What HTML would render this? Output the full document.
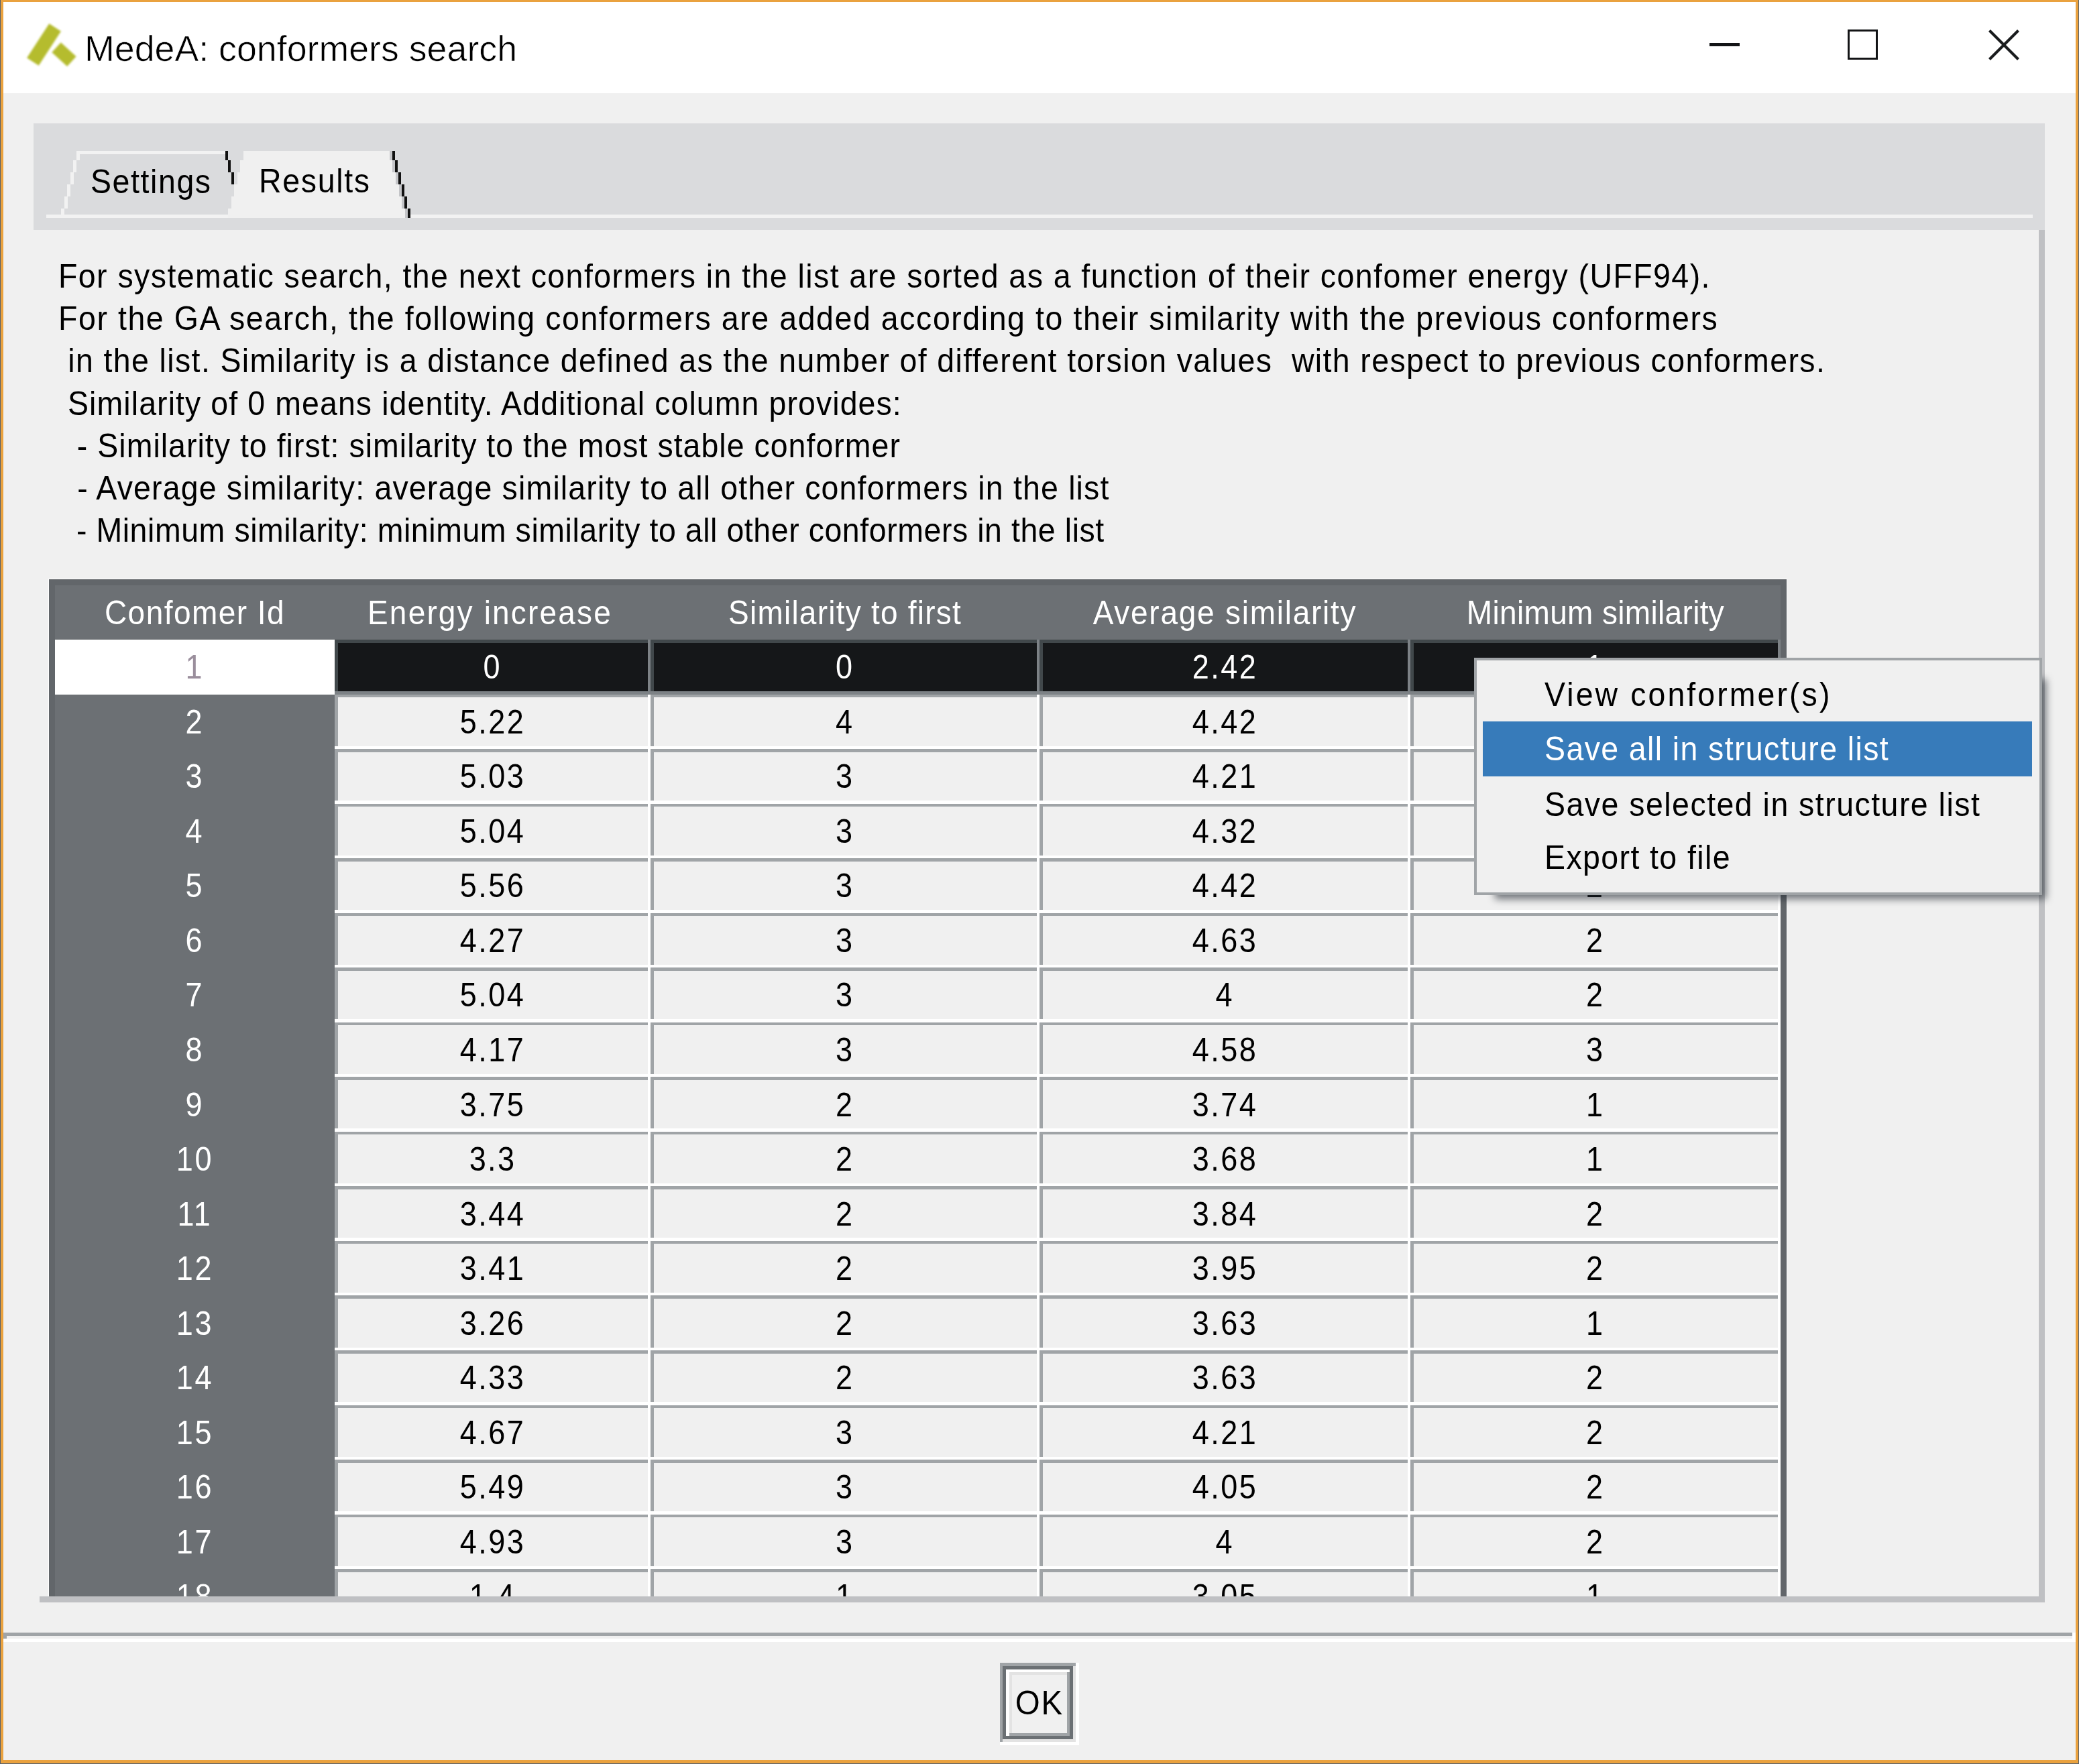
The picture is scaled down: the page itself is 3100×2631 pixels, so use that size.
<!DOCTYPE html>
<html><head><meta charset="utf-8"><style>
html,body{margin:0;padding:0;}
body{width:3100px;height:2631px;position:relative;overflow:hidden;background:#F0F0F0;font-family:"Liberation Sans",sans-serif;}
.r{position:absolute;}
.t{position:absolute;white-space:pre;}
</style></head><body>
<div class="r" style="left:0.00px;top:0.00px;width:3100.00px;height:2631.00px;background:#56606B;"></div>
<div class="r" style="left:1.00px;top:0.00px;width:3098.00px;height:2630.00px;background:#EAA23F;"></div>
<div class="r" style="left:5.00px;top:3.00px;width:3090.00px;height:136.00px;background:#FFFFFF;"></div>
<div class="r" style="left:5.00px;top:139.00px;width:3090.00px;height:2486.00px;background:#F0F0F0;"></div>
<div class="r" style="left:34.5px;top:56.1px;width:61px;height:21px;background:#B5BC2E;transform:rotate(-57deg);filter:blur(1.8px);"></div>
<div class="r" style="left:80.05px;top:71.4px;width:30.5px;height:20px;background:#B5BC2E;transform:rotate(42.5deg);filter:blur(1.8px);"></div>
<div class="t" style="left:126.00px;top:21.59px;font-size:54px;line-height:100px;color:#000;transform:scaleX(0.9950);transform-origin:left center;-webkit-text-stroke:0.7px #FFFFFF;">MedeA: conformers search</div>
<div class="r" style="left:2549.00px;top:64.00px;width:45.00px;height:5.00px;background:#131416;"></div>
<div class="r" style="left:2755px;top:44px;width:45px;height:45px;box-sizing:border-box;border:3.8px solid #131416;"></div>
<svg class="r" style="left:2960px;top:40px" width="56" height="54" viewBox="0 0 56 54"><path d="M6.5 5.5 L49.5 48.5 M49.5 5.5 L6.5 48.5" stroke="#1A1C1E" stroke-width="4.2" fill="none"/></svg>
<div class="r" style="left:50.00px;top:184.00px;width:2999.00px;height:159.00px;background:#DADBDD;"></div>
<div class="r" style="left:69.00px;top:320.00px;width:2962.00px;height:5.00px;background:#F2F2F2;"></div>
<div class="r" style="left:114.00px;top:225.00px;width:222.00px;height:5.00px;background:#F2F2F2;"></div>
<div class="r" style="left:114.00px;top:225.00px;width:5.00px;height:14.00px;background:#F2F2F2;"></div>
<div class="r" style="left:109.00px;top:239.00px;width:5.00px;height:18.00px;background:#F2F2F2;"></div>
<div class="r" style="left:105.00px;top:257.00px;width:5.00px;height:18.00px;background:#F2F2F2;"></div>
<div class="r" style="left:100.00px;top:275.00px;width:5.00px;height:18.00px;background:#F2F2F2;"></div>
<div class="r" style="left:96.00px;top:293.00px;width:5.00px;height:18.00px;background:#F2F2F2;"></div>
<div class="r" style="left:91.00px;top:311.00px;width:5.00px;height:9.00px;background:#F2F2F2;"></div>
<div class="r" style="left:336.00px;top:225.00px;width:4.00px;height:14.00px;background:#111;"></div>
<div class="r" style="left:340.00px;top:239.00px;width:4.00px;height:18.00px;background:#111;"></div>
<div class="r" style="left:345.00px;top:257.00px;width:4.00px;height:18.00px;background:#111;"></div>
<div class="r" style="left:363.00px;top:225.00px;width:222.00px;height:14.00px;background:#F0F0F0;"></div>
<div class="r" style="left:358.00px;top:239.00px;width:231.00px;height:18.00px;background:#F0F0F0;"></div>
<div class="r" style="left:354.00px;top:257.00px;width:240.00px;height:18.00px;background:#F0F0F0;"></div>
<div class="r" style="left:349.00px;top:275.00px;width:249.50px;height:18.00px;background:#F0F0F0;"></div>
<div class="r" style="left:344.50px;top:293.00px;width:258.00px;height:18.00px;background:#F0F0F0;"></div>
<div class="r" style="left:340.00px;top:311.00px;width:267.50px;height:14.00px;background:#F0F0F0;"></div>
<div class="r" style="left:581.00px;top:225.00px;width:4.00px;height:14.00px;background:#C4C5C8;"></div>
<div class="r" style="left:585.00px;top:225.00px;width:4.00px;height:14.00px;background:#111;"></div>
<div class="r" style="left:585.00px;top:239.00px;width:4.00px;height:18.00px;background:#C4C5C8;"></div>
<div class="r" style="left:589.00px;top:239.00px;width:4.00px;height:18.00px;background:#111;"></div>
<div class="r" style="left:590.00px;top:257.00px;width:4.00px;height:18.00px;background:#C4C5C8;"></div>
<div class="r" style="left:594.00px;top:257.00px;width:4.00px;height:18.00px;background:#111;"></div>
<div class="r" style="left:594.50px;top:275.00px;width:4.00px;height:18.00px;background:#C4C5C8;"></div>
<div class="r" style="left:598.50px;top:275.00px;width:4.00px;height:18.00px;background:#111;"></div>
<div class="r" style="left:598.50px;top:293.00px;width:4.00px;height:18.00px;background:#C4C5C8;"></div>
<div class="r" style="left:602.50px;top:293.00px;width:4.00px;height:18.00px;background:#111;"></div>
<div class="r" style="left:603.50px;top:311.00px;width:4.00px;height:14.00px;background:#C4C5C8;"></div>
<div class="r" style="left:607.50px;top:311.00px;width:4.00px;height:14.00px;background:#111;"></div>
<div class="t" style="left:134.50px;top:220.68px;font-size:50px;line-height:100px;color:#000;letter-spacing:1.7px;transform:scaleX(0.9300);transform-origin:left center;">Settings</div>
<div class="t" style="left:386.00px;top:220.28px;font-size:50px;line-height:100px;color:#000;letter-spacing:1.793px;transform:scaleX(0.9300);transform-origin:left center;">Results</div>
<div class="r" style="left:3040.00px;top:343.00px;width:9.00px;height:2047.00px;background:#BFC0C3;"></div>
<div class="r" style="left:59.00px;top:2381.00px;width:2990.00px;height:9.00px;background:#BFC0C3;"></div>
<div class="t" style="left:87.00px;top:361.68px;font-size:50px;line-height:100px;color:#000;letter-spacing:1.534px;transform:scaleX(0.9300);transform-origin:left center;">For systematic search, the next conformers in the list are sorted as a function of their confomer energy (UFF94).</div>
<div class="t" style="left:87.00px;top:424.98px;font-size:50px;line-height:100px;color:#000;letter-spacing:1.681px;transform:scaleX(0.9300);transform-origin:left center;">For the GA search, the following conformers are added according to their similarity with the previous conformers</div>
<div class="t" style="left:87.00px;top:488.28px;font-size:50px;line-height:100px;color:#000;letter-spacing:1.476px;transform:scaleX(0.9300);transform-origin:left center;"> in the list. Similarity is a distance defined as the number of different torsion values  with respect to previous conformers.</div>
<div class="t" style="left:87.00px;top:551.57px;font-size:50px;line-height:100px;color:#000;letter-spacing:1.159px;transform:scaleX(0.9300);transform-origin:left center;"> Similarity of 0 means identity. Additional column provides:</div>
<div class="t" style="left:87.00px;top:614.88px;font-size:50px;line-height:100px;color:#000;letter-spacing:1.087px;transform:scaleX(0.9300);transform-origin:left center;">  - Similarity to first: similarity to the most stable conformer</div>
<div class="t" style="left:87.00px;top:678.17px;font-size:50px;line-height:100px;color:#000;letter-spacing:1.244px;transform:scaleX(0.9300);transform-origin:left center;">  - Average similarity: average similarity to all other conformers in the list</div>
<div class="t" style="left:87.00px;top:741.47px;font-size:50px;line-height:100px;color:#000;letter-spacing:0.594px;transform:scaleX(0.9300);transform-origin:left center;">  - Minimum similarity: minimum similarity to all other conformers in the list</div>
<div class="r" style="left:72.00px;top:863.00px;width:2593.00px;height:1.00px;background:#FFFFFF;"></div>
<div class="r" style="left:72.00px;top:863.00px;width:1.00px;height:1518.00px;background:#FFFFFF;"></div>
<div class="r" style="left:2664.00px;top:863.00px;width:1.00px;height:1518.00px;background:#FFFFFF;"></div>
<div class="r" style="left:73px;top:864px;width:2591px;height:1517px;overflow:hidden;background:#62666A;">
<div class="r" style="left:9.00px;top:9.00px;width:2573.00px;height:81.00px;background:#6C7074;"></div>
<div class="t" style="left:9.00px;top:0.17px;font-size:50px;line-height:100px;color:#FFFFFF;width:417.00px;text-align:center;letter-spacing:1.577px;transform:scaleX(0.9200);transform-origin:center center;">Confomer Id</div>
<div class="t" style="left:422.30px;top:0.17px;font-size:50px;line-height:100px;color:#FFFFFF;width:471.00px;text-align:center;letter-spacing:2.357px;transform:scaleX(0.9200);transform-origin:center center;">Energy increase</div>
<div class="t" style="left:897.00px;top:0.17px;font-size:50px;line-height:100px;color:#FFFFFF;width:580.00px;text-align:center;letter-spacing:1.332px;transform:scaleX(0.9200);transform-origin:center center;">Similarity to first</div>
<div class="t" style="left:1477.00px;top:0.17px;font-size:50px;line-height:100px;color:#FFFFFF;width:553.00px;text-align:center;letter-spacing:1.902px;transform:scaleX(0.9200);transform-origin:center center;">Average similarity</div>
<div class="t" style="left:2030.00px;top:0.17px;font-size:50px;line-height:100px;color:#FFFFFF;width:552.00px;text-align:center;letter-spacing:0.372px;transform:scaleX(0.9200);transform-origin:center center;">Minimum similarity</div>
<div class="r" style="left:9.00px;top:90.00px;width:417.00px;height:81.54px;background:#FFFFFF;"></div>
<div class="t" style="left:9.00px;top:81.17px;font-size:50px;line-height:100px;color:#9A8E9C;width:417.00px;text-align:center;letter-spacing:3.09px;transform:scaleX(0.9000);transform-origin:center center;">1</div>
<div class="r" style="left:426.00px;top:90.00px;width:471.00px;height:81.54px;background:#7D8286;"></div>
<div class="r" style="left:426.00px;top:90.00px;width:466.50px;height:77.04px;background:#41484B;"></div>
<div class="r" style="left:430.50px;top:94.50px;width:462.00px;height:72.54px;background:#151719;"></div>
<div class="t" style="left:426.00px;top:81.17px;font-size:50px;line-height:100px;color:#FFFFFF;width:471.00px;text-align:center;letter-spacing:3.09px;transform:scaleX(0.9000);transform-origin:center center;">0</div>
<div class="r" style="left:897.00px;top:90.00px;width:580.00px;height:81.54px;background:#7D8286;"></div>
<div class="r" style="left:897.00px;top:90.00px;width:575.50px;height:77.04px;background:#41484B;"></div>
<div class="r" style="left:901.50px;top:94.50px;width:571.00px;height:72.54px;background:#151719;"></div>
<div class="t" style="left:897.00px;top:81.17px;font-size:50px;line-height:100px;color:#FFFFFF;width:580.00px;text-align:center;letter-spacing:3.09px;transform:scaleX(0.9000);transform-origin:center center;">0</div>
<div class="r" style="left:1477.00px;top:90.00px;width:553.00px;height:81.54px;background:#7D8286;"></div>
<div class="r" style="left:1477.00px;top:90.00px;width:548.50px;height:77.04px;background:#41484B;"></div>
<div class="r" style="left:1481.50px;top:94.50px;width:544.00px;height:72.54px;background:#151719;"></div>
<div class="t" style="left:1477.00px;top:81.17px;font-size:50px;line-height:100px;color:#FFFFFF;width:553.00px;text-align:center;letter-spacing:2.704px;transform:scaleX(0.9000);transform-origin:center center;">2.42</div>
<div class="r" style="left:2030.00px;top:90.00px;width:552.00px;height:81.54px;background:#7D8286;"></div>
<div class="r" style="left:2030.00px;top:90.00px;width:547.50px;height:77.04px;background:#41484B;"></div>
<div class="r" style="left:2034.50px;top:94.50px;width:543.00px;height:72.54px;background:#151719;"></div>
<div class="t" style="left:2030.00px;top:81.17px;font-size:50px;line-height:100px;color:#FFFFFF;width:552.00px;text-align:center;letter-spacing:3.09px;transform:scaleX(0.9000);transform-origin:center center;">1</div>
<div class="r" style="left:9.00px;top:171.54px;width:417.00px;height:81.54px;background:#6C7074;"></div>
<div class="t" style="left:9.00px;top:162.71px;font-size:50px;line-height:100px;color:#FFFFFF;width:417.00px;text-align:center;letter-spacing:3.09px;transform:scaleX(0.9000);transform-origin:center center;">2</div>
<div class="r" style="left:426.00px;top:171.54px;width:471.00px;height:81.54px;background:#FFFFFF;"></div>
<div class="r" style="left:426.00px;top:171.54px;width:466.50px;height:77.04px;background:#A0A4A7;"></div>
<div class="r" style="left:430.50px;top:176.04px;width:462.00px;height:72.54px;background:#F0F0F0;"></div>
<div class="t" style="left:426.00px;top:162.71px;font-size:50px;line-height:100px;color:#000000;width:471.00px;text-align:center;letter-spacing:2.704px;transform:scaleX(0.9000);transform-origin:center center;">5.22</div>
<div class="r" style="left:897.00px;top:171.54px;width:580.00px;height:81.54px;background:#FFFFFF;"></div>
<div class="r" style="left:897.00px;top:171.54px;width:575.50px;height:77.04px;background:#A0A4A7;"></div>
<div class="r" style="left:901.50px;top:176.04px;width:571.00px;height:72.54px;background:#F0F0F0;"></div>
<div class="t" style="left:897.00px;top:162.71px;font-size:50px;line-height:100px;color:#000000;width:580.00px;text-align:center;letter-spacing:3.09px;transform:scaleX(0.9000);transform-origin:center center;">4</div>
<div class="r" style="left:1477.00px;top:171.54px;width:553.00px;height:81.54px;background:#FFFFFF;"></div>
<div class="r" style="left:1477.00px;top:171.54px;width:548.50px;height:77.04px;background:#A0A4A7;"></div>
<div class="r" style="left:1481.50px;top:176.04px;width:544.00px;height:72.54px;background:#F0F0F0;"></div>
<div class="t" style="left:1477.00px;top:162.71px;font-size:50px;line-height:100px;color:#000000;width:553.00px;text-align:center;letter-spacing:2.704px;transform:scaleX(0.9000);transform-origin:center center;">4.42</div>
<div class="r" style="left:2030.00px;top:171.54px;width:552.00px;height:81.54px;background:#FFFFFF;"></div>
<div class="r" style="left:2030.00px;top:171.54px;width:547.50px;height:77.04px;background:#A0A4A7;"></div>
<div class="r" style="left:2034.50px;top:176.04px;width:543.00px;height:72.54px;background:#F0F0F0;"></div>
<div class="t" style="left:2030.00px;top:162.71px;font-size:50px;line-height:100px;color:#000000;width:552.00px;text-align:center;letter-spacing:3.09px;transform:scaleX(0.9000);transform-origin:center center;">1</div>
<div class="r" style="left:9.00px;top:253.08px;width:417.00px;height:81.54px;background:#6C7074;"></div>
<div class="t" style="left:9.00px;top:244.25px;font-size:50px;line-height:100px;color:#FFFFFF;width:417.00px;text-align:center;letter-spacing:3.09px;transform:scaleX(0.9000);transform-origin:center center;">3</div>
<div class="r" style="left:426.00px;top:253.08px;width:471.00px;height:81.54px;background:#FFFFFF;"></div>
<div class="r" style="left:426.00px;top:253.08px;width:466.50px;height:77.04px;background:#A0A4A7;"></div>
<div class="r" style="left:430.50px;top:257.58px;width:462.00px;height:72.54px;background:#F0F0F0;"></div>
<div class="t" style="left:426.00px;top:244.25px;font-size:50px;line-height:100px;color:#000000;width:471.00px;text-align:center;letter-spacing:2.704px;transform:scaleX(0.9000);transform-origin:center center;">5.03</div>
<div class="r" style="left:897.00px;top:253.08px;width:580.00px;height:81.54px;background:#FFFFFF;"></div>
<div class="r" style="left:897.00px;top:253.08px;width:575.50px;height:77.04px;background:#A0A4A7;"></div>
<div class="r" style="left:901.50px;top:257.58px;width:571.00px;height:72.54px;background:#F0F0F0;"></div>
<div class="t" style="left:897.00px;top:244.25px;font-size:50px;line-height:100px;color:#000000;width:580.00px;text-align:center;letter-spacing:3.09px;transform:scaleX(0.9000);transform-origin:center center;">3</div>
<div class="r" style="left:1477.00px;top:253.08px;width:553.00px;height:81.54px;background:#FFFFFF;"></div>
<div class="r" style="left:1477.00px;top:253.08px;width:548.50px;height:77.04px;background:#A0A4A7;"></div>
<div class="r" style="left:1481.50px;top:257.58px;width:544.00px;height:72.54px;background:#F0F0F0;"></div>
<div class="t" style="left:1477.00px;top:244.25px;font-size:50px;line-height:100px;color:#000000;width:553.00px;text-align:center;letter-spacing:2.704px;transform:scaleX(0.9000);transform-origin:center center;">4.21</div>
<div class="r" style="left:2030.00px;top:253.08px;width:552.00px;height:81.54px;background:#FFFFFF;"></div>
<div class="r" style="left:2030.00px;top:253.08px;width:547.50px;height:77.04px;background:#A0A4A7;"></div>
<div class="r" style="left:2034.50px;top:257.58px;width:543.00px;height:72.54px;background:#F0F0F0;"></div>
<div class="t" style="left:2030.00px;top:244.25px;font-size:50px;line-height:100px;color:#000000;width:552.00px;text-align:center;letter-spacing:3.09px;transform:scaleX(0.9000);transform-origin:center center;">2</div>
<div class="r" style="left:9.00px;top:334.62px;width:417.00px;height:81.54px;background:#6C7074;"></div>
<div class="t" style="left:9.00px;top:325.79px;font-size:50px;line-height:100px;color:#FFFFFF;width:417.00px;text-align:center;letter-spacing:3.09px;transform:scaleX(0.9000);transform-origin:center center;">4</div>
<div class="r" style="left:426.00px;top:334.62px;width:471.00px;height:81.54px;background:#FFFFFF;"></div>
<div class="r" style="left:426.00px;top:334.62px;width:466.50px;height:77.04px;background:#A0A4A7;"></div>
<div class="r" style="left:430.50px;top:339.12px;width:462.00px;height:72.54px;background:#F0F0F0;"></div>
<div class="t" style="left:426.00px;top:325.79px;font-size:50px;line-height:100px;color:#000000;width:471.00px;text-align:center;letter-spacing:2.704px;transform:scaleX(0.9000);transform-origin:center center;">5.04</div>
<div class="r" style="left:897.00px;top:334.62px;width:580.00px;height:81.54px;background:#FFFFFF;"></div>
<div class="r" style="left:897.00px;top:334.62px;width:575.50px;height:77.04px;background:#A0A4A7;"></div>
<div class="r" style="left:901.50px;top:339.12px;width:571.00px;height:72.54px;background:#F0F0F0;"></div>
<div class="t" style="left:897.00px;top:325.79px;font-size:50px;line-height:100px;color:#000000;width:580.00px;text-align:center;letter-spacing:3.09px;transform:scaleX(0.9000);transform-origin:center center;">3</div>
<div class="r" style="left:1477.00px;top:334.62px;width:553.00px;height:81.54px;background:#FFFFFF;"></div>
<div class="r" style="left:1477.00px;top:334.62px;width:548.50px;height:77.04px;background:#A0A4A7;"></div>
<div class="r" style="left:1481.50px;top:339.12px;width:544.00px;height:72.54px;background:#F0F0F0;"></div>
<div class="t" style="left:1477.00px;top:325.79px;font-size:50px;line-height:100px;color:#000000;width:553.00px;text-align:center;letter-spacing:2.704px;transform:scaleX(0.9000);transform-origin:center center;">4.32</div>
<div class="r" style="left:2030.00px;top:334.62px;width:552.00px;height:81.54px;background:#FFFFFF;"></div>
<div class="r" style="left:2030.00px;top:334.62px;width:547.50px;height:77.04px;background:#A0A4A7;"></div>
<div class="r" style="left:2034.50px;top:339.12px;width:543.00px;height:72.54px;background:#F0F0F0;"></div>
<div class="t" style="left:2030.00px;top:325.79px;font-size:50px;line-height:100px;color:#000000;width:552.00px;text-align:center;letter-spacing:3.09px;transform:scaleX(0.9000);transform-origin:center center;">2</div>
<div class="r" style="left:9.00px;top:416.16px;width:417.00px;height:81.54px;background:#6C7074;"></div>
<div class="t" style="left:9.00px;top:407.34px;font-size:50px;line-height:100px;color:#FFFFFF;width:417.00px;text-align:center;letter-spacing:3.09px;transform:scaleX(0.9000);transform-origin:center center;">5</div>
<div class="r" style="left:426.00px;top:416.16px;width:471.00px;height:81.54px;background:#FFFFFF;"></div>
<div class="r" style="left:426.00px;top:416.16px;width:466.50px;height:77.04px;background:#A0A4A7;"></div>
<div class="r" style="left:430.50px;top:420.66px;width:462.00px;height:72.54px;background:#F0F0F0;"></div>
<div class="t" style="left:426.00px;top:407.34px;font-size:50px;line-height:100px;color:#000000;width:471.00px;text-align:center;letter-spacing:2.704px;transform:scaleX(0.9000);transform-origin:center center;">5.56</div>
<div class="r" style="left:897.00px;top:416.16px;width:580.00px;height:81.54px;background:#FFFFFF;"></div>
<div class="r" style="left:897.00px;top:416.16px;width:575.50px;height:77.04px;background:#A0A4A7;"></div>
<div class="r" style="left:901.50px;top:420.66px;width:571.00px;height:72.54px;background:#F0F0F0;"></div>
<div class="t" style="left:897.00px;top:407.34px;font-size:50px;line-height:100px;color:#000000;width:580.00px;text-align:center;letter-spacing:3.09px;transform:scaleX(0.9000);transform-origin:center center;">3</div>
<div class="r" style="left:1477.00px;top:416.16px;width:553.00px;height:81.54px;background:#FFFFFF;"></div>
<div class="r" style="left:1477.00px;top:416.16px;width:548.50px;height:77.04px;background:#A0A4A7;"></div>
<div class="r" style="left:1481.50px;top:420.66px;width:544.00px;height:72.54px;background:#F0F0F0;"></div>
<div class="t" style="left:1477.00px;top:407.34px;font-size:50px;line-height:100px;color:#000000;width:553.00px;text-align:center;letter-spacing:2.704px;transform:scaleX(0.9000);transform-origin:center center;">4.42</div>
<div class="r" style="left:2030.00px;top:416.16px;width:552.00px;height:81.54px;background:#FFFFFF;"></div>
<div class="r" style="left:2030.00px;top:416.16px;width:547.50px;height:77.04px;background:#A0A4A7;"></div>
<div class="r" style="left:2034.50px;top:420.66px;width:543.00px;height:72.54px;background:#F0F0F0;"></div>
<div class="t" style="left:2030.00px;top:407.34px;font-size:50px;line-height:100px;color:#000000;width:552.00px;text-align:center;letter-spacing:3.09px;transform:scaleX(0.9000);transform-origin:center center;">2</div>
<div class="r" style="left:9.00px;top:497.70px;width:417.00px;height:81.54px;background:#6C7074;"></div>
<div class="t" style="left:9.00px;top:488.88px;font-size:50px;line-height:100px;color:#FFFFFF;width:417.00px;text-align:center;letter-spacing:3.09px;transform:scaleX(0.9000);transform-origin:center center;">6</div>
<div class="r" style="left:426.00px;top:497.70px;width:471.00px;height:81.54px;background:#FFFFFF;"></div>
<div class="r" style="left:426.00px;top:497.70px;width:466.50px;height:77.04px;background:#A0A4A7;"></div>
<div class="r" style="left:430.50px;top:502.20px;width:462.00px;height:72.54px;background:#F0F0F0;"></div>
<div class="t" style="left:426.00px;top:488.88px;font-size:50px;line-height:100px;color:#000000;width:471.00px;text-align:center;letter-spacing:2.704px;transform:scaleX(0.9000);transform-origin:center center;">4.27</div>
<div class="r" style="left:897.00px;top:497.70px;width:580.00px;height:81.54px;background:#FFFFFF;"></div>
<div class="r" style="left:897.00px;top:497.70px;width:575.50px;height:77.04px;background:#A0A4A7;"></div>
<div class="r" style="left:901.50px;top:502.20px;width:571.00px;height:72.54px;background:#F0F0F0;"></div>
<div class="t" style="left:897.00px;top:488.88px;font-size:50px;line-height:100px;color:#000000;width:580.00px;text-align:center;letter-spacing:3.09px;transform:scaleX(0.9000);transform-origin:center center;">3</div>
<div class="r" style="left:1477.00px;top:497.70px;width:553.00px;height:81.54px;background:#FFFFFF;"></div>
<div class="r" style="left:1477.00px;top:497.70px;width:548.50px;height:77.04px;background:#A0A4A7;"></div>
<div class="r" style="left:1481.50px;top:502.20px;width:544.00px;height:72.54px;background:#F0F0F0;"></div>
<div class="t" style="left:1477.00px;top:488.88px;font-size:50px;line-height:100px;color:#000000;width:553.00px;text-align:center;letter-spacing:2.704px;transform:scaleX(0.9000);transform-origin:center center;">4.63</div>
<div class="r" style="left:2030.00px;top:497.70px;width:552.00px;height:81.54px;background:#FFFFFF;"></div>
<div class="r" style="left:2030.00px;top:497.70px;width:547.50px;height:77.04px;background:#A0A4A7;"></div>
<div class="r" style="left:2034.50px;top:502.20px;width:543.00px;height:72.54px;background:#F0F0F0;"></div>
<div class="t" style="left:2030.00px;top:488.88px;font-size:50px;line-height:100px;color:#000000;width:552.00px;text-align:center;letter-spacing:3.09px;transform:scaleX(0.9000);transform-origin:center center;">2</div>
<div class="r" style="left:9.00px;top:579.24px;width:417.00px;height:81.54px;background:#6C7074;"></div>
<div class="t" style="left:9.00px;top:570.41px;font-size:50px;line-height:100px;color:#FFFFFF;width:417.00px;text-align:center;letter-spacing:3.09px;transform:scaleX(0.9000);transform-origin:center center;">7</div>
<div class="r" style="left:426.00px;top:579.24px;width:471.00px;height:81.54px;background:#FFFFFF;"></div>
<div class="r" style="left:426.00px;top:579.24px;width:466.50px;height:77.04px;background:#A0A4A7;"></div>
<div class="r" style="left:430.50px;top:583.74px;width:462.00px;height:72.54px;background:#F0F0F0;"></div>
<div class="t" style="left:426.00px;top:570.41px;font-size:50px;line-height:100px;color:#000000;width:471.00px;text-align:center;letter-spacing:2.704px;transform:scaleX(0.9000);transform-origin:center center;">5.04</div>
<div class="r" style="left:897.00px;top:579.24px;width:580.00px;height:81.54px;background:#FFFFFF;"></div>
<div class="r" style="left:897.00px;top:579.24px;width:575.50px;height:77.04px;background:#A0A4A7;"></div>
<div class="r" style="left:901.50px;top:583.74px;width:571.00px;height:72.54px;background:#F0F0F0;"></div>
<div class="t" style="left:897.00px;top:570.41px;font-size:50px;line-height:100px;color:#000000;width:580.00px;text-align:center;letter-spacing:3.09px;transform:scaleX(0.9000);transform-origin:center center;">3</div>
<div class="r" style="left:1477.00px;top:579.24px;width:553.00px;height:81.54px;background:#FFFFFF;"></div>
<div class="r" style="left:1477.00px;top:579.24px;width:548.50px;height:77.04px;background:#A0A4A7;"></div>
<div class="r" style="left:1481.50px;top:583.74px;width:544.00px;height:72.54px;background:#F0F0F0;"></div>
<div class="t" style="left:1477.00px;top:570.41px;font-size:50px;line-height:100px;color:#000000;width:553.00px;text-align:center;letter-spacing:3.09px;transform:scaleX(0.9000);transform-origin:center center;">4</div>
<div class="r" style="left:2030.00px;top:579.24px;width:552.00px;height:81.54px;background:#FFFFFF;"></div>
<div class="r" style="left:2030.00px;top:579.24px;width:547.50px;height:77.04px;background:#A0A4A7;"></div>
<div class="r" style="left:2034.50px;top:583.74px;width:543.00px;height:72.54px;background:#F0F0F0;"></div>
<div class="t" style="left:2030.00px;top:570.41px;font-size:50px;line-height:100px;color:#000000;width:552.00px;text-align:center;letter-spacing:3.09px;transform:scaleX(0.9000);transform-origin:center center;">2</div>
<div class="r" style="left:9.00px;top:660.78px;width:417.00px;height:81.54px;background:#6C7074;"></div>
<div class="t" style="left:9.00px;top:651.96px;font-size:50px;line-height:100px;color:#FFFFFF;width:417.00px;text-align:center;letter-spacing:3.09px;transform:scaleX(0.9000);transform-origin:center center;">8</div>
<div class="r" style="left:426.00px;top:660.78px;width:471.00px;height:81.54px;background:#FFFFFF;"></div>
<div class="r" style="left:426.00px;top:660.78px;width:466.50px;height:77.04px;background:#A0A4A7;"></div>
<div class="r" style="left:430.50px;top:665.28px;width:462.00px;height:72.54px;background:#F0F0F0;"></div>
<div class="t" style="left:426.00px;top:651.96px;font-size:50px;line-height:100px;color:#000000;width:471.00px;text-align:center;letter-spacing:2.704px;transform:scaleX(0.9000);transform-origin:center center;">4.17</div>
<div class="r" style="left:897.00px;top:660.78px;width:580.00px;height:81.54px;background:#FFFFFF;"></div>
<div class="r" style="left:897.00px;top:660.78px;width:575.50px;height:77.04px;background:#A0A4A7;"></div>
<div class="r" style="left:901.50px;top:665.28px;width:571.00px;height:72.54px;background:#F0F0F0;"></div>
<div class="t" style="left:897.00px;top:651.96px;font-size:50px;line-height:100px;color:#000000;width:580.00px;text-align:center;letter-spacing:3.09px;transform:scaleX(0.9000);transform-origin:center center;">3</div>
<div class="r" style="left:1477.00px;top:660.78px;width:553.00px;height:81.54px;background:#FFFFFF;"></div>
<div class="r" style="left:1477.00px;top:660.78px;width:548.50px;height:77.04px;background:#A0A4A7;"></div>
<div class="r" style="left:1481.50px;top:665.28px;width:544.00px;height:72.54px;background:#F0F0F0;"></div>
<div class="t" style="left:1477.00px;top:651.96px;font-size:50px;line-height:100px;color:#000000;width:553.00px;text-align:center;letter-spacing:2.704px;transform:scaleX(0.9000);transform-origin:center center;">4.58</div>
<div class="r" style="left:2030.00px;top:660.78px;width:552.00px;height:81.54px;background:#FFFFFF;"></div>
<div class="r" style="left:2030.00px;top:660.78px;width:547.50px;height:77.04px;background:#A0A4A7;"></div>
<div class="r" style="left:2034.50px;top:665.28px;width:543.00px;height:72.54px;background:#F0F0F0;"></div>
<div class="t" style="left:2030.00px;top:651.96px;font-size:50px;line-height:100px;color:#000000;width:552.00px;text-align:center;letter-spacing:3.09px;transform:scaleX(0.9000);transform-origin:center center;">3</div>
<div class="r" style="left:9.00px;top:742.32px;width:417.00px;height:81.54px;background:#6C7074;"></div>
<div class="t" style="left:9.00px;top:733.50px;font-size:50px;line-height:100px;color:#FFFFFF;width:417.00px;text-align:center;letter-spacing:3.09px;transform:scaleX(0.9000);transform-origin:center center;">9</div>
<div class="r" style="left:426.00px;top:742.32px;width:471.00px;height:81.54px;background:#FFFFFF;"></div>
<div class="r" style="left:426.00px;top:742.32px;width:466.50px;height:77.04px;background:#A0A4A7;"></div>
<div class="r" style="left:430.50px;top:746.82px;width:462.00px;height:72.54px;background:#F0F0F0;"></div>
<div class="t" style="left:426.00px;top:733.50px;font-size:50px;line-height:100px;color:#000000;width:471.00px;text-align:center;letter-spacing:2.704px;transform:scaleX(0.9000);transform-origin:center center;">3.75</div>
<div class="r" style="left:897.00px;top:742.32px;width:580.00px;height:81.54px;background:#FFFFFF;"></div>
<div class="r" style="left:897.00px;top:742.32px;width:575.50px;height:77.04px;background:#A0A4A7;"></div>
<div class="r" style="left:901.50px;top:746.82px;width:571.00px;height:72.54px;background:#F0F0F0;"></div>
<div class="t" style="left:897.00px;top:733.50px;font-size:50px;line-height:100px;color:#000000;width:580.00px;text-align:center;letter-spacing:3.09px;transform:scaleX(0.9000);transform-origin:center center;">2</div>
<div class="r" style="left:1477.00px;top:742.32px;width:553.00px;height:81.54px;background:#FFFFFF;"></div>
<div class="r" style="left:1477.00px;top:742.32px;width:548.50px;height:77.04px;background:#A0A4A7;"></div>
<div class="r" style="left:1481.50px;top:746.82px;width:544.00px;height:72.54px;background:#F0F0F0;"></div>
<div class="t" style="left:1477.00px;top:733.50px;font-size:50px;line-height:100px;color:#000000;width:553.00px;text-align:center;letter-spacing:2.704px;transform:scaleX(0.9000);transform-origin:center center;">3.74</div>
<div class="r" style="left:2030.00px;top:742.32px;width:552.00px;height:81.54px;background:#FFFFFF;"></div>
<div class="r" style="left:2030.00px;top:742.32px;width:547.50px;height:77.04px;background:#A0A4A7;"></div>
<div class="r" style="left:2034.50px;top:746.82px;width:543.00px;height:72.54px;background:#F0F0F0;"></div>
<div class="t" style="left:2030.00px;top:733.50px;font-size:50px;line-height:100px;color:#000000;width:552.00px;text-align:center;letter-spacing:3.09px;transform:scaleX(0.9000);transform-origin:center center;">1</div>
<div class="r" style="left:9.00px;top:823.86px;width:417.00px;height:81.54px;background:#6C7074;"></div>
<div class="t" style="left:9.00px;top:815.04px;font-size:50px;line-height:100px;color:#FFFFFF;width:417.00px;text-align:center;letter-spacing:3.09px;transform:scaleX(0.9000);transform-origin:center center;">10</div>
<div class="r" style="left:426.00px;top:823.86px;width:471.00px;height:81.54px;background:#FFFFFF;"></div>
<div class="r" style="left:426.00px;top:823.86px;width:466.50px;height:77.04px;background:#A0A4A7;"></div>
<div class="r" style="left:430.50px;top:828.36px;width:462.00px;height:72.54px;background:#F0F0F0;"></div>
<div class="t" style="left:426.00px;top:815.04px;font-size:50px;line-height:100px;color:#000000;width:471.00px;text-align:center;letter-spacing:2.575px;transform:scaleX(0.9000);transform-origin:center center;">3.3</div>
<div class="r" style="left:897.00px;top:823.86px;width:580.00px;height:81.54px;background:#FFFFFF;"></div>
<div class="r" style="left:897.00px;top:823.86px;width:575.50px;height:77.04px;background:#A0A4A7;"></div>
<div class="r" style="left:901.50px;top:828.36px;width:571.00px;height:72.54px;background:#F0F0F0;"></div>
<div class="t" style="left:897.00px;top:815.04px;font-size:50px;line-height:100px;color:#000000;width:580.00px;text-align:center;letter-spacing:3.09px;transform:scaleX(0.9000);transform-origin:center center;">2</div>
<div class="r" style="left:1477.00px;top:823.86px;width:553.00px;height:81.54px;background:#FFFFFF;"></div>
<div class="r" style="left:1477.00px;top:823.86px;width:548.50px;height:77.04px;background:#A0A4A7;"></div>
<div class="r" style="left:1481.50px;top:828.36px;width:544.00px;height:72.54px;background:#F0F0F0;"></div>
<div class="t" style="left:1477.00px;top:815.04px;font-size:50px;line-height:100px;color:#000000;width:553.00px;text-align:center;letter-spacing:2.704px;transform:scaleX(0.9000);transform-origin:center center;">3.68</div>
<div class="r" style="left:2030.00px;top:823.86px;width:552.00px;height:81.54px;background:#FFFFFF;"></div>
<div class="r" style="left:2030.00px;top:823.86px;width:547.50px;height:77.04px;background:#A0A4A7;"></div>
<div class="r" style="left:2034.50px;top:828.36px;width:543.00px;height:72.54px;background:#F0F0F0;"></div>
<div class="t" style="left:2030.00px;top:815.04px;font-size:50px;line-height:100px;color:#000000;width:552.00px;text-align:center;letter-spacing:3.09px;transform:scaleX(0.9000);transform-origin:center center;">1</div>
<div class="r" style="left:9.00px;top:905.40px;width:417.00px;height:81.54px;background:#6C7074;"></div>
<div class="t" style="left:9.00px;top:896.58px;font-size:50px;line-height:100px;color:#FFFFFF;width:417.00px;text-align:center;letter-spacing:2.885px;transform:scaleX(0.9000);transform-origin:center center;">11</div>
<div class="r" style="left:426.00px;top:905.40px;width:471.00px;height:81.54px;background:#FFFFFF;"></div>
<div class="r" style="left:426.00px;top:905.40px;width:466.50px;height:77.04px;background:#A0A4A7;"></div>
<div class="r" style="left:430.50px;top:909.90px;width:462.00px;height:72.54px;background:#F0F0F0;"></div>
<div class="t" style="left:426.00px;top:896.58px;font-size:50px;line-height:100px;color:#000000;width:471.00px;text-align:center;letter-spacing:2.704px;transform:scaleX(0.9000);transform-origin:center center;">3.44</div>
<div class="r" style="left:897.00px;top:905.40px;width:580.00px;height:81.54px;background:#FFFFFF;"></div>
<div class="r" style="left:897.00px;top:905.40px;width:575.50px;height:77.04px;background:#A0A4A7;"></div>
<div class="r" style="left:901.50px;top:909.90px;width:571.00px;height:72.54px;background:#F0F0F0;"></div>
<div class="t" style="left:897.00px;top:896.58px;font-size:50px;line-height:100px;color:#000000;width:580.00px;text-align:center;letter-spacing:3.09px;transform:scaleX(0.9000);transform-origin:center center;">2</div>
<div class="r" style="left:1477.00px;top:905.40px;width:553.00px;height:81.54px;background:#FFFFFF;"></div>
<div class="r" style="left:1477.00px;top:905.40px;width:548.50px;height:77.04px;background:#A0A4A7;"></div>
<div class="r" style="left:1481.50px;top:909.90px;width:544.00px;height:72.54px;background:#F0F0F0;"></div>
<div class="t" style="left:1477.00px;top:896.58px;font-size:50px;line-height:100px;color:#000000;width:553.00px;text-align:center;letter-spacing:2.704px;transform:scaleX(0.9000);transform-origin:center center;">3.84</div>
<div class="r" style="left:2030.00px;top:905.40px;width:552.00px;height:81.54px;background:#FFFFFF;"></div>
<div class="r" style="left:2030.00px;top:905.40px;width:547.50px;height:77.04px;background:#A0A4A7;"></div>
<div class="r" style="left:2034.50px;top:909.90px;width:543.00px;height:72.54px;background:#F0F0F0;"></div>
<div class="t" style="left:2030.00px;top:896.58px;font-size:50px;line-height:100px;color:#000000;width:552.00px;text-align:center;letter-spacing:3.09px;transform:scaleX(0.9000);transform-origin:center center;">2</div>
<div class="r" style="left:9.00px;top:986.94px;width:417.00px;height:81.54px;background:#6C7074;"></div>
<div class="t" style="left:9.00px;top:978.12px;font-size:50px;line-height:100px;color:#FFFFFF;width:417.00px;text-align:center;letter-spacing:3.09px;transform:scaleX(0.9000);transform-origin:center center;">12</div>
<div class="r" style="left:426.00px;top:986.94px;width:471.00px;height:81.54px;background:#FFFFFF;"></div>
<div class="r" style="left:426.00px;top:986.94px;width:466.50px;height:77.04px;background:#A0A4A7;"></div>
<div class="r" style="left:430.50px;top:991.44px;width:462.00px;height:72.54px;background:#F0F0F0;"></div>
<div class="t" style="left:426.00px;top:978.12px;font-size:50px;line-height:100px;color:#000000;width:471.00px;text-align:center;letter-spacing:2.704px;transform:scaleX(0.9000);transform-origin:center center;">3.41</div>
<div class="r" style="left:897.00px;top:986.94px;width:580.00px;height:81.54px;background:#FFFFFF;"></div>
<div class="r" style="left:897.00px;top:986.94px;width:575.50px;height:77.04px;background:#A0A4A7;"></div>
<div class="r" style="left:901.50px;top:991.44px;width:571.00px;height:72.54px;background:#F0F0F0;"></div>
<div class="t" style="left:897.00px;top:978.12px;font-size:50px;line-height:100px;color:#000000;width:580.00px;text-align:center;letter-spacing:3.09px;transform:scaleX(0.9000);transform-origin:center center;">2</div>
<div class="r" style="left:1477.00px;top:986.94px;width:553.00px;height:81.54px;background:#FFFFFF;"></div>
<div class="r" style="left:1477.00px;top:986.94px;width:548.50px;height:77.04px;background:#A0A4A7;"></div>
<div class="r" style="left:1481.50px;top:991.44px;width:544.00px;height:72.54px;background:#F0F0F0;"></div>
<div class="t" style="left:1477.00px;top:978.12px;font-size:50px;line-height:100px;color:#000000;width:553.00px;text-align:center;letter-spacing:2.704px;transform:scaleX(0.9000);transform-origin:center center;">3.95</div>
<div class="r" style="left:2030.00px;top:986.94px;width:552.00px;height:81.54px;background:#FFFFFF;"></div>
<div class="r" style="left:2030.00px;top:986.94px;width:547.50px;height:77.04px;background:#A0A4A7;"></div>
<div class="r" style="left:2034.50px;top:991.44px;width:543.00px;height:72.54px;background:#F0F0F0;"></div>
<div class="t" style="left:2030.00px;top:978.12px;font-size:50px;line-height:100px;color:#000000;width:552.00px;text-align:center;letter-spacing:3.09px;transform:scaleX(0.9000);transform-origin:center center;">2</div>
<div class="r" style="left:9.00px;top:1068.48px;width:417.00px;height:81.54px;background:#6C7074;"></div>
<div class="t" style="left:9.00px;top:1059.65px;font-size:50px;line-height:100px;color:#FFFFFF;width:417.00px;text-align:center;letter-spacing:3.09px;transform:scaleX(0.9000);transform-origin:center center;">13</div>
<div class="r" style="left:426.00px;top:1068.48px;width:471.00px;height:81.54px;background:#FFFFFF;"></div>
<div class="r" style="left:426.00px;top:1068.48px;width:466.50px;height:77.04px;background:#A0A4A7;"></div>
<div class="r" style="left:430.50px;top:1072.98px;width:462.00px;height:72.54px;background:#F0F0F0;"></div>
<div class="t" style="left:426.00px;top:1059.65px;font-size:50px;line-height:100px;color:#000000;width:471.00px;text-align:center;letter-spacing:2.704px;transform:scaleX(0.9000);transform-origin:center center;">3.26</div>
<div class="r" style="left:897.00px;top:1068.48px;width:580.00px;height:81.54px;background:#FFFFFF;"></div>
<div class="r" style="left:897.00px;top:1068.48px;width:575.50px;height:77.04px;background:#A0A4A7;"></div>
<div class="r" style="left:901.50px;top:1072.98px;width:571.00px;height:72.54px;background:#F0F0F0;"></div>
<div class="t" style="left:897.00px;top:1059.65px;font-size:50px;line-height:100px;color:#000000;width:580.00px;text-align:center;letter-spacing:3.09px;transform:scaleX(0.9000);transform-origin:center center;">2</div>
<div class="r" style="left:1477.00px;top:1068.48px;width:553.00px;height:81.54px;background:#FFFFFF;"></div>
<div class="r" style="left:1477.00px;top:1068.48px;width:548.50px;height:77.04px;background:#A0A4A7;"></div>
<div class="r" style="left:1481.50px;top:1072.98px;width:544.00px;height:72.54px;background:#F0F0F0;"></div>
<div class="t" style="left:1477.00px;top:1059.65px;font-size:50px;line-height:100px;color:#000000;width:553.00px;text-align:center;letter-spacing:2.704px;transform:scaleX(0.9000);transform-origin:center center;">3.63</div>
<div class="r" style="left:2030.00px;top:1068.48px;width:552.00px;height:81.54px;background:#FFFFFF;"></div>
<div class="r" style="left:2030.00px;top:1068.48px;width:547.50px;height:77.04px;background:#A0A4A7;"></div>
<div class="r" style="left:2034.50px;top:1072.98px;width:543.00px;height:72.54px;background:#F0F0F0;"></div>
<div class="t" style="left:2030.00px;top:1059.65px;font-size:50px;line-height:100px;color:#000000;width:552.00px;text-align:center;letter-spacing:3.09px;transform:scaleX(0.9000);transform-origin:center center;">1</div>
<div class="r" style="left:9.00px;top:1150.02px;width:417.00px;height:81.54px;background:#6C7074;"></div>
<div class="t" style="left:9.00px;top:1141.19px;font-size:50px;line-height:100px;color:#FFFFFF;width:417.00px;text-align:center;letter-spacing:3.09px;transform:scaleX(0.9000);transform-origin:center center;">14</div>
<div class="r" style="left:426.00px;top:1150.02px;width:471.00px;height:81.54px;background:#FFFFFF;"></div>
<div class="r" style="left:426.00px;top:1150.02px;width:466.50px;height:77.04px;background:#A0A4A7;"></div>
<div class="r" style="left:430.50px;top:1154.52px;width:462.00px;height:72.54px;background:#F0F0F0;"></div>
<div class="t" style="left:426.00px;top:1141.19px;font-size:50px;line-height:100px;color:#000000;width:471.00px;text-align:center;letter-spacing:2.704px;transform:scaleX(0.9000);transform-origin:center center;">4.33</div>
<div class="r" style="left:897.00px;top:1150.02px;width:580.00px;height:81.54px;background:#FFFFFF;"></div>
<div class="r" style="left:897.00px;top:1150.02px;width:575.50px;height:77.04px;background:#A0A4A7;"></div>
<div class="r" style="left:901.50px;top:1154.52px;width:571.00px;height:72.54px;background:#F0F0F0;"></div>
<div class="t" style="left:897.00px;top:1141.19px;font-size:50px;line-height:100px;color:#000000;width:580.00px;text-align:center;letter-spacing:3.09px;transform:scaleX(0.9000);transform-origin:center center;">2</div>
<div class="r" style="left:1477.00px;top:1150.02px;width:553.00px;height:81.54px;background:#FFFFFF;"></div>
<div class="r" style="left:1477.00px;top:1150.02px;width:548.50px;height:77.04px;background:#A0A4A7;"></div>
<div class="r" style="left:1481.50px;top:1154.52px;width:544.00px;height:72.54px;background:#F0F0F0;"></div>
<div class="t" style="left:1477.00px;top:1141.19px;font-size:50px;line-height:100px;color:#000000;width:553.00px;text-align:center;letter-spacing:2.704px;transform:scaleX(0.9000);transform-origin:center center;">3.63</div>
<div class="r" style="left:2030.00px;top:1150.02px;width:552.00px;height:81.54px;background:#FFFFFF;"></div>
<div class="r" style="left:2030.00px;top:1150.02px;width:547.50px;height:77.04px;background:#A0A4A7;"></div>
<div class="r" style="left:2034.50px;top:1154.52px;width:543.00px;height:72.54px;background:#F0F0F0;"></div>
<div class="t" style="left:2030.00px;top:1141.19px;font-size:50px;line-height:100px;color:#000000;width:552.00px;text-align:center;letter-spacing:3.09px;transform:scaleX(0.9000);transform-origin:center center;">2</div>
<div class="r" style="left:9.00px;top:1231.56px;width:417.00px;height:81.54px;background:#6C7074;"></div>
<div class="t" style="left:9.00px;top:1222.74px;font-size:50px;line-height:100px;color:#FFFFFF;width:417.00px;text-align:center;letter-spacing:3.09px;transform:scaleX(0.9000);transform-origin:center center;">15</div>
<div class="r" style="left:426.00px;top:1231.56px;width:471.00px;height:81.54px;background:#FFFFFF;"></div>
<div class="r" style="left:426.00px;top:1231.56px;width:466.50px;height:77.04px;background:#A0A4A7;"></div>
<div class="r" style="left:430.50px;top:1236.06px;width:462.00px;height:72.54px;background:#F0F0F0;"></div>
<div class="t" style="left:426.00px;top:1222.74px;font-size:50px;line-height:100px;color:#000000;width:471.00px;text-align:center;letter-spacing:2.704px;transform:scaleX(0.9000);transform-origin:center center;">4.67</div>
<div class="r" style="left:897.00px;top:1231.56px;width:580.00px;height:81.54px;background:#FFFFFF;"></div>
<div class="r" style="left:897.00px;top:1231.56px;width:575.50px;height:77.04px;background:#A0A4A7;"></div>
<div class="r" style="left:901.50px;top:1236.06px;width:571.00px;height:72.54px;background:#F0F0F0;"></div>
<div class="t" style="left:897.00px;top:1222.74px;font-size:50px;line-height:100px;color:#000000;width:580.00px;text-align:center;letter-spacing:3.09px;transform:scaleX(0.9000);transform-origin:center center;">3</div>
<div class="r" style="left:1477.00px;top:1231.56px;width:553.00px;height:81.54px;background:#FFFFFF;"></div>
<div class="r" style="left:1477.00px;top:1231.56px;width:548.50px;height:77.04px;background:#A0A4A7;"></div>
<div class="r" style="left:1481.50px;top:1236.06px;width:544.00px;height:72.54px;background:#F0F0F0;"></div>
<div class="t" style="left:1477.00px;top:1222.74px;font-size:50px;line-height:100px;color:#000000;width:553.00px;text-align:center;letter-spacing:2.704px;transform:scaleX(0.9000);transform-origin:center center;">4.21</div>
<div class="r" style="left:2030.00px;top:1231.56px;width:552.00px;height:81.54px;background:#FFFFFF;"></div>
<div class="r" style="left:2030.00px;top:1231.56px;width:547.50px;height:77.04px;background:#A0A4A7;"></div>
<div class="r" style="left:2034.50px;top:1236.06px;width:543.00px;height:72.54px;background:#F0F0F0;"></div>
<div class="t" style="left:2030.00px;top:1222.74px;font-size:50px;line-height:100px;color:#000000;width:552.00px;text-align:center;letter-spacing:3.09px;transform:scaleX(0.9000);transform-origin:center center;">2</div>
<div class="r" style="left:9.00px;top:1313.10px;width:417.00px;height:81.54px;background:#6C7074;"></div>
<div class="t" style="left:9.00px;top:1304.28px;font-size:50px;line-height:100px;color:#FFFFFF;width:417.00px;text-align:center;letter-spacing:3.09px;transform:scaleX(0.9000);transform-origin:center center;">16</div>
<div class="r" style="left:426.00px;top:1313.10px;width:471.00px;height:81.54px;background:#FFFFFF;"></div>
<div class="r" style="left:426.00px;top:1313.10px;width:466.50px;height:77.04px;background:#A0A4A7;"></div>
<div class="r" style="left:430.50px;top:1317.60px;width:462.00px;height:72.54px;background:#F0F0F0;"></div>
<div class="t" style="left:426.00px;top:1304.28px;font-size:50px;line-height:100px;color:#000000;width:471.00px;text-align:center;letter-spacing:2.704px;transform:scaleX(0.9000);transform-origin:center center;">5.49</div>
<div class="r" style="left:897.00px;top:1313.10px;width:580.00px;height:81.54px;background:#FFFFFF;"></div>
<div class="r" style="left:897.00px;top:1313.10px;width:575.50px;height:77.04px;background:#A0A4A7;"></div>
<div class="r" style="left:901.50px;top:1317.60px;width:571.00px;height:72.54px;background:#F0F0F0;"></div>
<div class="t" style="left:897.00px;top:1304.28px;font-size:50px;line-height:100px;color:#000000;width:580.00px;text-align:center;letter-spacing:3.09px;transform:scaleX(0.9000);transform-origin:center center;">3</div>
<div class="r" style="left:1477.00px;top:1313.10px;width:553.00px;height:81.54px;background:#FFFFFF;"></div>
<div class="r" style="left:1477.00px;top:1313.10px;width:548.50px;height:77.04px;background:#A0A4A7;"></div>
<div class="r" style="left:1481.50px;top:1317.60px;width:544.00px;height:72.54px;background:#F0F0F0;"></div>
<div class="t" style="left:1477.00px;top:1304.28px;font-size:50px;line-height:100px;color:#000000;width:553.00px;text-align:center;letter-spacing:2.704px;transform:scaleX(0.9000);transform-origin:center center;">4.05</div>
<div class="r" style="left:2030.00px;top:1313.10px;width:552.00px;height:81.54px;background:#FFFFFF;"></div>
<div class="r" style="left:2030.00px;top:1313.10px;width:547.50px;height:77.04px;background:#A0A4A7;"></div>
<div class="r" style="left:2034.50px;top:1317.60px;width:543.00px;height:72.54px;background:#F0F0F0;"></div>
<div class="t" style="left:2030.00px;top:1304.28px;font-size:50px;line-height:100px;color:#000000;width:552.00px;text-align:center;letter-spacing:3.09px;transform:scaleX(0.9000);transform-origin:center center;">2</div>
<div class="r" style="left:9.00px;top:1394.64px;width:417.00px;height:81.54px;background:#6C7074;"></div>
<div class="t" style="left:9.00px;top:1385.82px;font-size:50px;line-height:100px;color:#FFFFFF;width:417.00px;text-align:center;letter-spacing:3.09px;transform:scaleX(0.9000);transform-origin:center center;">17</div>
<div class="r" style="left:426.00px;top:1394.64px;width:471.00px;height:81.54px;background:#FFFFFF;"></div>
<div class="r" style="left:426.00px;top:1394.64px;width:466.50px;height:77.04px;background:#A0A4A7;"></div>
<div class="r" style="left:430.50px;top:1399.14px;width:462.00px;height:72.54px;background:#F0F0F0;"></div>
<div class="t" style="left:426.00px;top:1385.82px;font-size:50px;line-height:100px;color:#000000;width:471.00px;text-align:center;letter-spacing:2.704px;transform:scaleX(0.9000);transform-origin:center center;">4.93</div>
<div class="r" style="left:897.00px;top:1394.64px;width:580.00px;height:81.54px;background:#FFFFFF;"></div>
<div class="r" style="left:897.00px;top:1394.64px;width:575.50px;height:77.04px;background:#A0A4A7;"></div>
<div class="r" style="left:901.50px;top:1399.14px;width:571.00px;height:72.54px;background:#F0F0F0;"></div>
<div class="t" style="left:897.00px;top:1385.82px;font-size:50px;line-height:100px;color:#000000;width:580.00px;text-align:center;letter-spacing:3.09px;transform:scaleX(0.9000);transform-origin:center center;">3</div>
<div class="r" style="left:1477.00px;top:1394.64px;width:553.00px;height:81.54px;background:#FFFFFF;"></div>
<div class="r" style="left:1477.00px;top:1394.64px;width:548.50px;height:77.04px;background:#A0A4A7;"></div>
<div class="r" style="left:1481.50px;top:1399.14px;width:544.00px;height:72.54px;background:#F0F0F0;"></div>
<div class="t" style="left:1477.00px;top:1385.82px;font-size:50px;line-height:100px;color:#000000;width:553.00px;text-align:center;letter-spacing:3.09px;transform:scaleX(0.9000);transform-origin:center center;">4</div>
<div class="r" style="left:2030.00px;top:1394.64px;width:552.00px;height:81.54px;background:#FFFFFF;"></div>
<div class="r" style="left:2030.00px;top:1394.64px;width:547.50px;height:77.04px;background:#A0A4A7;"></div>
<div class="r" style="left:2034.50px;top:1399.14px;width:543.00px;height:72.54px;background:#F0F0F0;"></div>
<div class="t" style="left:2030.00px;top:1385.82px;font-size:50px;line-height:100px;color:#000000;width:552.00px;text-align:center;letter-spacing:3.09px;transform:scaleX(0.9000);transform-origin:center center;">2</div>
<div class="r" style="left:9.00px;top:1476.18px;width:417.00px;height:81.54px;background:#6C7074;"></div>
<div class="t" style="left:9.00px;top:1467.36px;font-size:50px;line-height:100px;color:#FFFFFF;width:417.00px;text-align:center;letter-spacing:3.09px;transform:scaleX(0.9000);transform-origin:center center;">18</div>
<div class="r" style="left:426.00px;top:1476.18px;width:471.00px;height:81.54px;background:#FFFFFF;"></div>
<div class="r" style="left:426.00px;top:1476.18px;width:466.50px;height:77.04px;background:#A0A4A7;"></div>
<div class="r" style="left:430.50px;top:1480.68px;width:462.00px;height:72.54px;background:#F0F0F0;"></div>
<div class="t" style="left:426.00px;top:1467.36px;font-size:50px;line-height:100px;color:#000000;width:471.00px;text-align:center;letter-spacing:2.575px;transform:scaleX(0.9000);transform-origin:center center;">1.4</div>
<div class="r" style="left:897.00px;top:1476.18px;width:580.00px;height:81.54px;background:#FFFFFF;"></div>
<div class="r" style="left:897.00px;top:1476.18px;width:575.50px;height:77.04px;background:#A0A4A7;"></div>
<div class="r" style="left:901.50px;top:1480.68px;width:571.00px;height:72.54px;background:#F0F0F0;"></div>
<div class="t" style="left:897.00px;top:1467.36px;font-size:50px;line-height:100px;color:#000000;width:580.00px;text-align:center;letter-spacing:3.09px;transform:scaleX(0.9000);transform-origin:center center;">1</div>
<div class="r" style="left:1477.00px;top:1476.18px;width:553.00px;height:81.54px;background:#FFFFFF;"></div>
<div class="r" style="left:1477.00px;top:1476.18px;width:548.50px;height:77.04px;background:#A0A4A7;"></div>
<div class="r" style="left:1481.50px;top:1480.68px;width:544.00px;height:72.54px;background:#F0F0F0;"></div>
<div class="t" style="left:1477.00px;top:1467.36px;font-size:50px;line-height:100px;color:#000000;width:553.00px;text-align:center;letter-spacing:2.704px;transform:scaleX(0.9000);transform-origin:center center;">3.05</div>
<div class="r" style="left:2030.00px;top:1476.18px;width:552.00px;height:81.54px;background:#FFFFFF;"></div>
<div class="r" style="left:2030.00px;top:1476.18px;width:547.50px;height:77.04px;background:#A0A4A7;"></div>
<div class="r" style="left:2034.50px;top:1480.68px;width:543.00px;height:72.54px;background:#F0F0F0;"></div>
<div class="t" style="left:2030.00px;top:1467.36px;font-size:50px;line-height:100px;color:#000000;width:552.00px;text-align:center;letter-spacing:3.09px;transform:scaleX(0.9000);transform-origin:center center;">1</div>
</div>
<div class="r" style="left:2229.00px;top:1013.00px;width:822.00px;height:328.00px;background:rgba(35,42,50,0.62);filter:blur(6px);"></div>
<div class="r" style="left:2198px;top:981px;width:847px;height:354px;box-sizing:border-box;border:4.5px solid #A0A4A7;background:#F0F0F0;"></div>
<div class="r" style="left:2211.00px;top:1076.00px;width:819.00px;height:81.60px;background:#377BBA;"></div>
<div class="t" style="left:2303.00px;top:986.17px;font-size:50px;line-height:100px;color:#000;letter-spacing:3.293px;transform:scaleX(0.9300);transform-origin:left center;">View conformer(s)</div>
<div class="t" style="left:2303.00px;top:1066.67px;font-size:50px;line-height:100px;color:#FFFFFF;letter-spacing:1.488px;transform:scaleX(0.9300);transform-origin:left center;">Save all in structure list</div>
<div class="t" style="left:2303.00px;top:1150.17px;font-size:50px;line-height:100px;color:#000;letter-spacing:1.579px;transform:scaleX(0.9300);transform-origin:left center;">Save selected in structure list</div>
<div class="t" style="left:2303.00px;top:1229.17px;font-size:50px;line-height:100px;color:#000;letter-spacing:1.494px;transform:scaleX(0.9300);transform-origin:left center;">Export to file</div>
<div class="r" style="left:5.00px;top:2435.00px;width:3085.00px;height:5.00px;background:#A0A4A7;"></div>
<div class="r" style="left:5.00px;top:2440.00px;width:5.00px;height:4.00px;background:#A0A4A7;"></div>
<div class="r" style="left:5.00px;top:2444.00px;width:3090.00px;height:5.00px;background:#FFFFFF;"></div>
<div class="r" style="left:3090.00px;top:2435.00px;width:5.00px;height:14.00px;background:#FFFFFF;"></div>
<div class="r" style="left:1491.00px;top:2480.00px;width:118.00px;height:123.00px;background:#FFFFFF;"></div>
<div class="r" style="left:1491.00px;top:2480.00px;width:113.00px;height:118.00px;background:#A0A4A7;"></div>
<div class="r" style="left:1495.00px;top:2485.00px;width:109.00px;height:113.00px;background:#E3E3E3;"></div>
<div class="r" style="left:1495.00px;top:2485.00px;width:105.00px;height:109.00px;background:#6B7074;"></div>
<div class="r" style="left:1500.00px;top:2490.00px;width:95.00px;height:99.00px;background:#FFFFFF;"></div>
<div class="r" style="left:1505.00px;top:2494.00px;width:90.00px;height:95.00px;background:#A0A4A7;"></div>
<div class="r" style="left:1505.00px;top:2494.00px;width:86.00px;height:91.00px;background:#E3E3E3;"></div>
<div class="r" style="left:1509.00px;top:2498.00px;width:82.00px;height:87.00px;background:#F0F0F0;"></div>
<div class="t" style="left:1491.00px;top:2489.68px;font-size:50px;line-height:100px;color:#000;width:118.00px;text-align:center;letter-spacing:1.901px;transform:scaleX(0.9500);transform-origin:center center;">OK</div>
</body></html>
